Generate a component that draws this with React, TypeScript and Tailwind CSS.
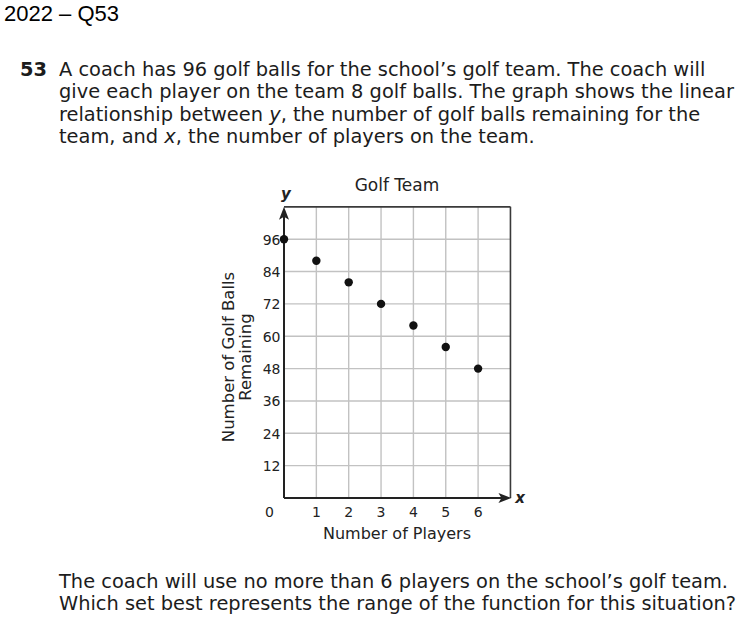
const CELL = 32.35;
const OX = 284;
const OY = 498;
const TOP = OY - 9 * CELL;
const RIGHT = OX + 7 * CELL;

const yTicks = [12, 24, 36, 48, 60, 72, 84, 96];
const xTicks = [1, 2, 3, 4, 5, 6];
const points = [0, 1, 2, 3, 4, 5, 6].map((x) => ({ x, y: 96 - 8 * x }));

const px = (x: number) => OX + x * CELL;
const py = (y: number) => OY - (y / 12) * CELL;

function GolfChart() {
  return (
    <svg
      width={330}
      height={380}
      viewBox="200 168 330 380"
      className="block ml-[200px] mt-[19.5px]"
      fontFamily="'DejaVu Sans', Verdana, sans-serif"
    >
      {/* grid */}
      {[1, 2, 3, 4, 5, 6].map((i) => (
        <line key={"v" + i} x1={px(i)} y1={TOP} x2={px(i)} y2={OY} stroke="#c2c2c2" strokeWidth={1.4} />
      ))}
      {[1, 2, 3, 4, 5, 6, 7, 8].map((j) => (
        <line key={"h" + j} x1={OX} y1={OY - j * CELL} x2={RIGHT} y2={OY - j * CELL} stroke="#c2c2c2" strokeWidth={1.4} />
      ))}
      {/* border */}
      <line x1={OX} y1={TOP} x2={RIGHT} y2={TOP} stroke="#3a3a3a" strokeWidth={1.6} />
      <line x1={RIGHT} y1={TOP} x2={RIGHT} y2={OY} stroke="#3a3a3a" strokeWidth={1.6} />
      {/* axes */}
      <line x1={OX} y1={OY} x2={RIGHT - 4} y2={OY} stroke="#222" strokeWidth={2} />
      <line x1={OX} y1={OY} x2={OX} y2={TOP + 4} stroke="#222" strokeWidth={2} />
      <path d={`M${OX},${TOP} L${OX + 5},${TOP + 13} L${OX},${TOP + 10} L${OX - 5},${TOP + 13} Z`} fill="#222" />
      <path d={`M${RIGHT + 1},${OY} L${RIGHT - 12},${OY - 5} L${RIGHT - 9},${OY} L${RIGHT - 12},${OY + 5} Z`} fill="#222" />

      {/* points */}
      {points.map((p) => (
        <circle key={p.x} cx={px(p.x)} cy={py(p.y)} r={4.2} fill="#111" />
      ))}

      {/* tick labels */}
      {yTicks.map((t) => (
        <text key={t} x={280.5} y={py(t) + 5.3} fontSize={14} textAnchor="end" fill="#222">
          {t}
        </text>
      ))}
      <text x={269.5} y={516.5} fontSize={14} textAnchor="middle" fill="#222">0</text>
      {xTicks.map((t) => (
        <text key={t} x={px(t)} y={516.5} fontSize={14} textAnchor="middle" fill="#222">
          {t}
        </text>
      ))}

      {/* axis variable labels */}
      <text x={286} y={199} fontSize={15} fontWeight="bold" fontStyle="italic" textAnchor="middle" fill="#222">y</text>
      <text x={520} y={502.5} fontSize={15} fontWeight="bold" fontStyle="italic" textAnchor="middle" fill="#222">x</text>

      {/* titles */}
      <text x={397} y={191} fontSize={17} textAnchor="middle" fill="#222">Golf Team</text>
      <text x={397} y={539} fontSize={16} textAnchor="middle" fill="#222">Number of Players</text>
      <g transform="translate(234 357) rotate(-90)">
        <text x={0} y={0} fontSize={16.5} textAnchor="middle" fill="#222">Number of Golf Balls</text>
        <text x={0} y={16.5} fontSize={16.5} textAnchor="middle" fill="#222">Remaining</text>
      </g>
    </svg>
  );
}

export default function App() {
  return (
    <div className="w-[753px] h-[619px] bg-white text-[#1c1c1c] overflow-hidden">
      <div className="pt-[1px] pl-[4px] text-[22px] leading-[26px] font-['Liberation_Sans',Arial,sans-serif] text-black">
        2022 – Q53
      </div>

      <div className="mt-[32px] flex font-['DejaVu_Sans',Verdana,sans-serif] text-[19.4px] leading-[22.3px]">
        <span className="w-[59px] pl-[20px] font-bold shrink-0">53</span>
        <p>
          A coach has 96 golf balls for the school’s golf team. The coach will
          <br />
          give each player on the team 8 golf balls. The graph shows the linear
          <br />
          relationship between <i>y</i>, the number of golf balls remaining for the
          <br />
          team, and <i>x</i>, the number of players on the team.
        </p>
      </div>

      <GolfChart />

      <p className="mt-[23px] pl-[59px] font-['DejaVu_Sans',Verdana,sans-serif] text-[19.4px] leading-[22.7px]">
        The coach will use no more than 6 players on the school’s golf team.
        <br />
        Which set best represents the range of the function for this situation?
      </p>
    </div>
  );
}
